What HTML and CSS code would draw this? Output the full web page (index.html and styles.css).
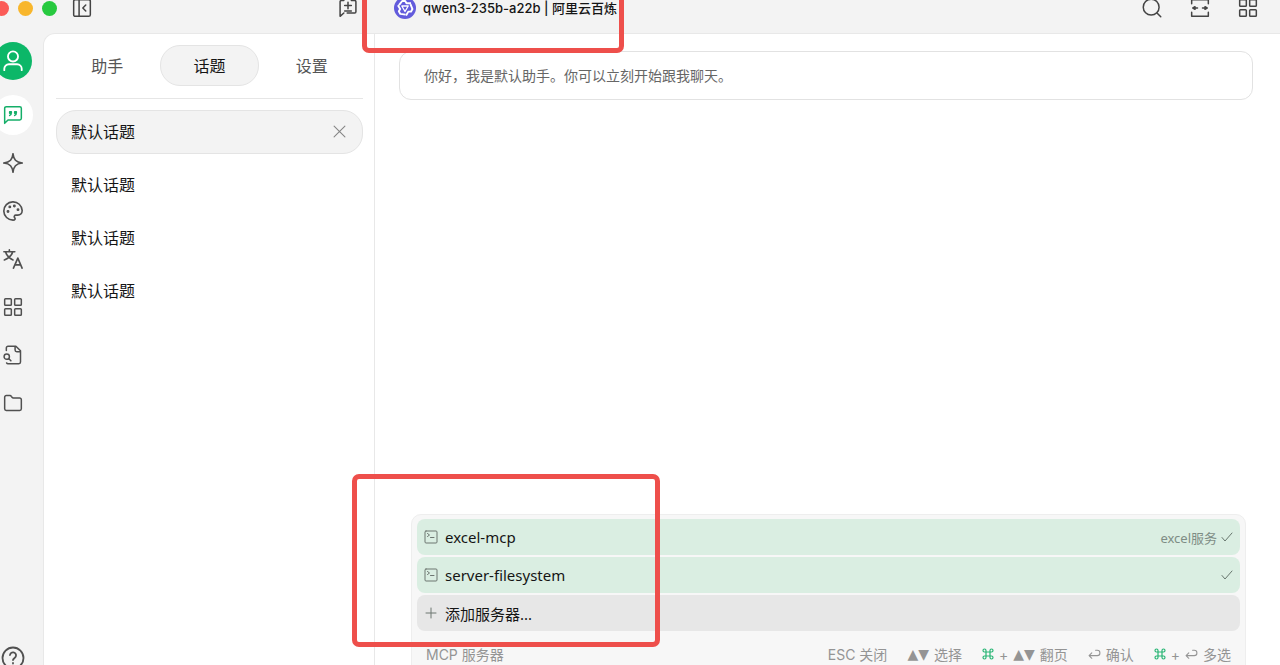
FILE: index.html
```html
<!DOCTYPE html>
<html lang="zh-CN">
<head>
<meta charset="utf-8">
<title>默认助手</title>
<link rel="stylesheet" href="styles.css">
</head>
<body>
<div class="app">
  <header class="titlebar">
    <div class="titlebar-left">
      <div class="lights"><span class="light red"></span><span class="light amber"></span><span class="light green"></span></div>
      <button class="icon-btn" aria-label="收起侧栏"><svg class="icon" viewBox="0 0 24 24"><rect x="2" y="2" width="20" height="20" rx="2"/><path d="M8.500 2v20M16.500 8.500 13 12l3.500 3.500"/></svg></button>
      <button class="icon-btn new-topic" aria-label="新建话题"><svg class="icon" viewBox="0 0 24 24"><path d="M7 3H4a1.500 1.500 0 0 0-1.500 1.500V22l4.500-4M16 3h4a1.500 1.500 0 0 1 1.500 1.500v12a1.500 1.500 0 0 1-1.500 1.500H11M12 5v8M8 9h8M8 15.500h8"/></svg></button>
    </div>
    <div class="titlebar-main">
      <button class="model">
        <svg class="model-logo" viewBox="0 0 22 22"><circle cx="11" cy="11" r="11" fill="#625bdc"/><g fill="none" stroke="#fff" stroke-width="1.900" stroke-linejoin="round"><path id="blade" d="M5 8.200 8.200 4h3l1.300 2.300H17"/><use href="#blade" transform="rotate(120 11 11)"/><use href="#blade" transform="rotate(240 11 11)"/><path d="M7.800 9h6.400L11 14.500z" stroke-width="1.300"/></g></svg>
        <span class="model-name">qwen3-235b-a22b | 阿里云百炼</span>
      </button>
      <nav class="tools" aria-label="工具">
        <button class="icon-btn" aria-label="搜索"><svg class="icon" viewBox="0 0 24 24"><circle cx="11" cy="11" r="9.500"/><path d="m18 18 4.500 4.500"/></svg></button>
        <button class="icon-btn" aria-label="展开"><svg class="icon" viewBox="0 0 24 24"><path d="M2 7V2h20v5M2 17v5h20v-5M9 12H4M15 12h5"/><path d="M6 10.500 3.500 12 6 13.500zM18 10.500l2.500 1.500-2.500 1.500z" class="solid"/></svg></button>
        <button class="icon-btn" aria-label="应用"><svg class="icon" viewBox="0 0 24 24"><rect x="2" y="2" width="8" height="8" rx="1"/><rect x="14" y="2" width="8" height="8" rx="1"/><rect x="2" y="14" width="8" height="8" rx="1"/><rect x="14" y="14" width="8" height="8" rx="1"/></svg></button>
      </nav>
    </div>
  </header>

  <div class="body">
    <nav class="rail" aria-label="导航">
      <button class="avatar" aria-label="用户"><svg class="icon" viewBox="0 0 24 24"><circle cx="12" cy="7" r="5.500"/><path d="M2.500 22v-1.500a5 5 0 0 1 5-5h9a5 5 0 0 1 5 5V22"/></svg></button>
      <button class="rail-btn active" aria-label="聊天"><svg class="icon" viewBox="0 0 24 24"><path d="M2 22V4a2 2 0 0 1 2-2h16a2 2 0 0 1 2 2v12a2 2 0 0 1-2 2H6z"/><path d="M8 12.500a3 3 0 0 0 2-3V8H8v2h2M14 12.500a3 3 0 0 0 2-3V8h-2v2h2"/></svg></button>
      <button class="rail-btn" aria-label="智能体"><svg class="icon" viewBox="1 1 22 22"><path d="M12 1.800c.8 6.500 3 9.400 10.200 10.200-7.200.8-9.400 3.700-10.200 10.200C11.200 15.700 9 12.800 1.800 12 9 11.200 11.200 8.300 12 1.800z"/></svg></button>
      <button class="rail-btn" aria-label="绘画"><svg class="icon" viewBox="1 1 22 22"><path d="M12 22.100a10.100 10.100 0 1 1 10.100-10.600c0 3-2.200 5-4.800 5h-2.200a1.700 1.700 0 0 0-1.300 2.800c1 1.300.5 2.800-1.800 2.800z"/><circle class="solid" cx="13.500" cy="6.500" r=".7"/><circle class="solid" cx="17.500" cy="10.500" r=".7"/><circle class="solid" cx="8.500" cy="7.500" r=".7"/><circle class="solid" cx="6.500" cy="12.500" r=".7"/></svg></button>
      <button class="rail-btn" aria-label="翻译"><svg class="icon" viewBox="1 1 22 22"><path d="M2 4h12M8 2v2M4 4.500c1.300 4 4 7 8 8.500M11.500 4.500c-1.300 4-4.500 7-9 8.500M12.500 22l4.800-11L22 22M14 18.500h6.500"/></svg></button>
      <button class="rail-btn" aria-label="小程序"><svg class="icon" viewBox="0 0 24 24"><rect x="2" y="2" width="8" height="8" rx="1"/><rect x="14" y="2" width="8" height="8" rx="1"/><rect x="2" y="14" width="8" height="8" rx="1"/><rect x="14" y="14" width="8" height="8" rx="1"/></svg></button>
      <button class="rail-btn" aria-label="知识库"><svg class="icon" viewBox="0 0 24 24"><path d="M4 6.500V3.500A2 2 0 0 1 6 1.500h9.500l5.500 5.500v13.500a2 2 0 0 1-2 2H6a2 2 0 0 1-1.700-1M14.500 1.500V6a2 2 0 0 0 2 2H21"/><circle cx="4.500" cy="14" r="3.200"/><path d="m7 16.500 2.500 2.500"/></svg></button>
      <button class="rail-btn" aria-label="文件"><svg class="icon" viewBox="0 0 24 24"><path d="M20 21a2 2 0 0 0 2-2V8a2 2 0 0 0-2-2h-7.500a2 2 0 0 1-1.700-.9L10 4a2 2 0 0 0-1.700-1H4a2 2 0 0 0-2 2v14a2 2 0 0 0 2 2z"/></svg></button>
      <button class="rail-btn help" aria-label="帮助"><svg class="icon" viewBox="0 0 24 24"><circle cx="12" cy="12" r="10.500"/><path d="M9 9a3 3 0 0 1 6 .8c0 2-3 2.700-3 4.200M12 17v.6"/></svg></button>
    </nav>

    <aside class="sidebar">
      <div class="tabs">
        <button class="tab">助手</button>
        <button class="tab selected">话题</button>
        <button class="tab">设置</button>
      </div>
      <ul class="topics">
        <li class="topic current"><span>默认话题</span><button class="close" aria-label="关闭"><svg class="icon" viewBox="0 0 12 12"><path d="m1 1 10 10M11 1 1 11"/></svg></button></li>
        <li class="topic">默认话题</li>
        <li class="topic">默认话题</li>
        <li class="topic">默认话题</li>
      </ul>
    </aside>

    <main class="chat">
      <p class="prompt">你好，我是默认助手。你可以立刻开始跟我聊天。</p>
      <section class="panel">
        <div class="servers">
          <button class="server on"><svg class="icon server-icon" viewBox="0 0 14 14"><rect x="1" y="1" width="12" height="12" rx="1"/><path d="m3.500 3.500 2 1.500-2 1.500M6.500 7.500h3.500"/></svg><span class="server-name">excel-mcp</span><span class="server-note">excel服务</span><svg class="icon check" viewBox="0 0 12 12"><path d="m1 6.500 3 3.500 7-8"/></svg></button>
          <button class="server on"><svg class="icon server-icon" viewBox="0 0 14 14"><rect x="1" y="1" width="12" height="12" rx="1"/><path d="m3.500 3.500 2 1.500-2 1.500M6.500 7.500h3.500"/></svg><span class="server-name">server-filesystem</span><svg class="icon check" viewBox="0 0 12 12"><path d="m1 6.500 3 3.500 7-8"/></svg></button>
          <button class="server add"><svg class="icon server-icon" viewBox="0 0 14 14"><path d="M7 2v10M2 7h10"/></svg><span class="server-name">添加服务器...</span></button>
        </div>
        <footer class="hints">
          <span class="hints-title">MCP 服务器</span>
          <span class="hint">ESC 关闭</span>
          <span class="hint"><span class="arrows">▲▼</span>选择</span>
          <span class="hint"><svg class="icon cmd" viewBox="0 0 12 12"><path d="M4 4H2.500A1.500 1.500 0 1 1 4 2.500v7A1.500 1.500 0 1 1 2.500 8h7A1.500 1.500 0 1 1 8 9.500v-7A1.500 1.500 0 1 1 9.500 4z"/></svg>+<span class="arrows">▲▼</span>翻页</span>
          <span class="hint"><svg class="icon enter" viewBox="0 0 12 12"><path d="M3.500 4.500 1 7l2.500 2.500M1 7h7.500a2.500 2.500 0 0 0 0-5H7"/></svg>确认</span>
          <span class="hint"><svg class="icon cmd" viewBox="0 0 12 12"><path d="M4 4H2.500A1.500 1.500 0 1 1 4 2.500v7A1.500 1.500 0 1 1 2.500 8h7A1.500 1.500 0 1 1 8 9.500v-7A1.500 1.500 0 1 1 9.500 4z"/></svg>+<svg class="icon enter" viewBox="0 0 12 12"><path d="M3.500 4.500 1 7l2.500 2.500M1 7h7.500a2.500 2.500 0 0 0 0-5H7"/></svg>多选</span>
        </footer>
      </section>
    </main>
  </div>
  <div class="mark mark-model"></div>
  <div class="mark mark-servers"></div>
</div>
</body>
</html>
```
FILE: styles.css
```css
* { box-sizing: border-box; }

body {
  margin: 0;
  font-family: "Noto Sans", "Noto Sans CJK SC", sans-serif;
  font-size: 16px;
  color: #151515;
  background: #f3f3f3;
}

button {
  padding: 0;
  border: 0;
  background: none;
  font: inherit;
  color: inherit;
}

.icon {
  display: block;
  flex: none;
  fill: none;
  stroke: currentColor;
  stroke-width: 1.8;
  stroke-linecap: round;
  stroke-linejoin: round;
}

.icon .solid { fill: currentColor; }

.app {
  position: relative;
  display: flex;
  flex-direction: column;
  height: 100vh;
  overflow: hidden;
}

/* Title bar: runs past the top edge of the window */
.titlebar {
  display: flex;
  flex: none;
  height: 49px;
  margin-top: -16px;
  padding-bottom: 1px;
  color: #444;
}

.titlebar-left {
  display: flex;
  align-items: center;
  width: 374px;
  padding-right: 16px;
}

.titlebar-main {
  display: flex;
  flex: 1;
  align-items: center;
  justify-content: space-between;
  padding: 0 22px 0 20px;
}

.lights {
  display: flex;
  gap: 9px;
  margin: 0 15px 0 -6px;
}

.light { width: 15px; height: 15px; border-radius: 50%; }
.red { background: #fb5b57; }
.amber { background: #f8b62c; }
.green { background: #27c93f; }

.icon-btn .icon { width: 20px; height: 20px; }
.new-topic { margin-left: auto; }

.model { display: flex; align-items: center; gap: 7px; }
.model-logo { width: 22px; height: 22px; }

.model-name {
  width: 198px;
  overflow: hidden;
  font-family: Inter, "Noto Sans CJK SC", sans-serif;
  font-size: 13px;
  font-weight: 500;
  line-height: 20px;
  white-space: nowrap;
  text-align: left;
  color: #151515;
}

.tools { display: flex; gap: 28px; }

.body { display: flex; flex: 1; min-height: 0; }

/* Navigation rail: runs past the left edge of the window */
.rail {
  display: flex;
  flex: none;
  flex-direction: column;
  align-items: center;
  gap: 8px;
  width: 60px;
  margin-left: -17px;
  padding-top: 9px;
  color: #505050;
}

.rail-btn .icon { width: 20px; height: 20px; }

.avatar,
.rail-btn {
  display: flex;
  flex: none;
  align-items: center;
  justify-content: center;
  width: 40px;
  height: 40px;
  border-radius: 50%;
}

.avatar {
  width: 38px;
  height: 38px;
  margin-bottom: 7px;
  color: #fff;
  background: #0cb768;
}

.avatar .icon { width: 22px; height: 22px; stroke-width: 2; }

.active { color: #14ae68; background: #fff; }
.help { margin-top: auto; margin-bottom: -13px; }
.help .icon { width: 24px; height: 24px; }

.sidebar {
  width: 332px;
  padding: 11px 11px 0 12px;
  border: solid #e8e8e8;
  border-width: 1px 1px 0;
  border-top-left-radius: 12px;
  background: #fff;
}

.tabs {
  display: grid;
  grid-template-columns: repeat(3, 1fr);
  gap: 4px;
  padding: 0 2px 12px;
  border-bottom: 1px solid #e6e6e6;
}

.tab {
  height: 41px;
  padding-bottom: 2px;
  border: 1px solid transparent;
  border-radius: 20px;
  color: #555;
}

.selected { color: #151515; border-color: #e4e4e4; background: #f3f3f3; }

.topics {
  display: flex;
  flex-direction: column;
  gap: 9px;
  margin: 0;
  padding: 11px 0 0;
  list-style: none;
}

.topic {
  display: flex;
  align-items: center;
  justify-content: space-between;
  height: 44px;
  padding: 0 16px 2px 14px;
  border: 1px solid transparent;
  border-radius: 20px;
}

.current { border-color: #e4e4e4; background: #f3f3f3; }
.close { color: #858585; }
.close .icon { width: 13px; height: 13px; stroke-width: 1; }

.chat {
  display: flex;
  flex: 1;
  flex-direction: column;
  min-width: 0;
  padding: 17px 27px 0 24px;
  border-top: 1px solid #e8e8e8;
  background: #fff;
}

.prompt {
  margin: 0;
  padding: 12px 24px 11px;
  border: 1px solid #e2e2e2;
  border-radius: 12px;
  font-size: 14px;
  line-height: 24px;
  color: #666;
}

.panel {
  margin: auto 7px -13px 12px;
  padding: 4px 5px 0;
  border: 1px solid #eee;
  border-radius: 10px;
  background: #f7f7f7;
}

.servers { display: flex; flex-direction: column; gap: 2px; }

.server {
  display: flex;
  align-items: center;
  height: 36px;
  padding: 0 7px;
  border-radius: 8px;
}

.on { background: #daeee2; }
.add { background: #e7e7e7; }
.server-icon { width: 14px; height: 14px; margin-right: 7px; stroke-width: 1; color: #6d7671; }
.server-name { flex: 1; text-align: left; font-size: 15px; }
.server-note { font-size: 13px; color: #7e8d85; }
.check { width: 12px; height: 12px; margin-left: 4px; stroke-width: 1; color: #68776e; }

.hints {
  display: flex;
  align-items: center;
  gap: 20px;
  height: 46px;
  padding: 0 9px;
  font-family: Inter, "Noto Sans CJK SC", sans-serif;
  font-size: 14px;
  color: #949494;
}

.hints-title { flex: 1; }
.hint { display: flex; align-items: center; gap: 5px; white-space: nowrap; }
.arrows { font-family: "DejaVu Sans", sans-serif; }
.cmd { width: 12px; height: 12px; stroke-width: 1.2; color: #27b574; }
.enter { width: 13px; height: 13px; stroke-width: 1; }

/* Highlight frames over the window */
.mark {
  position: absolute;
  border: 5px solid #ee4f4b;
  border-radius: 7px;
  pointer-events: none;
}

.mark-model { left: 362px; top: -10px; width: 262px; height: 63px; }
.mark-servers { left: 352px; top: 474px; width: 308px; height: 173px; }
```
